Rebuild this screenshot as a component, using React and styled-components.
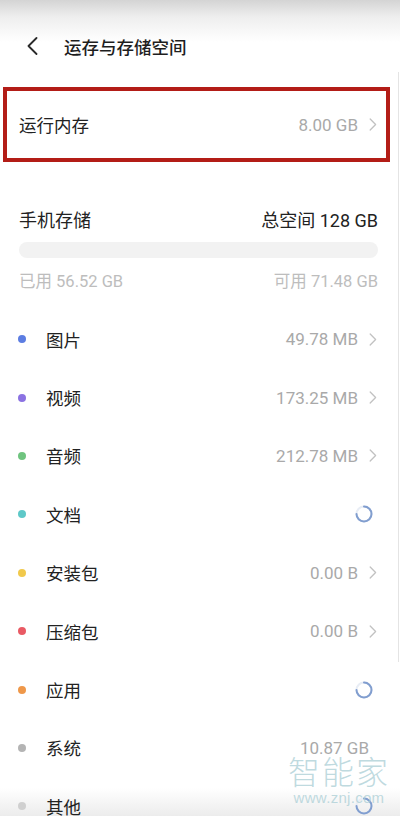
import React from "react";
import styled, { createGlobalStyle } from "styled-components";

const Global = createGlobalStyle`
  html, body { margin: 0; padding: 0; background: #fff; }
  body { font-family: Roboto, "Noto Sans CJK SC", "Noto Sans", sans-serif; -webkit-font-smoothing: antialiased; }
  * { box-sizing: border-box; }
`;

const Screen = styled.div`
  position: relative;
  width: 400px;
  height: 816px;
  overflow: hidden;
  background: #fff;
  isolation: isolate;
`;

const TopFade = styled.div`
  position: absolute;
  left: 0; right: 0; top: 0;
  height: 42px;
  background: linear-gradient(#d4d4d4 0%, #eeeeee 40%, rgba(255,255,255,0) 100%);
  pointer-events: none;
  z-index: 0;
`;

const BottomFade = styled.div`
  position: absolute;
  left: 0; right: 0; bottom: 0;
  height: 28px;
  background: linear-gradient(rgba(255,255,255,0), #ececec);
  pointer-events: none;
  z-index: 0;
`;

const ScrollTrack = styled.div`
  position: absolute;
  right: 1px; top: 72px;
  width: 1px; height: 590px;
  background: #e4e4e4;
`;

const Header = styled.header`
  position: relative;
  z-index: 1;
  display: flex;
  align-items: center;
  height: 60px;
  margin-top: 16px;
  padding-left: 27px;
  gap: 26px;
`;

const Title = styled.h1`
  margin: 0;
  font-size: 17.5px;
  font-weight: 500;
  color: #1e1e1e;
  font-family: "Noto Sans CJK SC", sans-serif;
`;

const Highlight = styled.div`
  margin: 11px 10px 0 3px;
  height: 75px;
  border: 4px solid #b31d17;
  display: flex;
  align-items: center;
  padding: 0 8px 0 12px;
`;

const Label = styled.span`
  font-family: "Noto Sans CJK SC", sans-serif;
  font-size: 17.5px;
  color: #222;
  flex: 1;
`;

const Value = styled.span`
  font-size: 17px;
  color: ${(p) => p.$color || "#a9a9a9"};
  margin-right: ${(p) => p.$mr || 0}px;
`;

const Slot = styled.span`
  width: 20px;
  display: flex;
  justify-content: flex-end;
  padding-right: 1px;
`;

const StorageSection = styled.section`
  margin-top: 45px;
  padding: 0 22px 0 19px;
`;

const SummaryRow = styled.div`
  display: flex;
  justify-content: space-between;
  align-items: center;
  height: ${(p) => p.$h}px;
  margin-top: ${(p) => p.$mt || 0}px;
`;

const Strong = styled.span`
  font-size: 18px;
  color: #222;
  font-family: Roboto, "Noto Sans CJK SC", sans-serif;
`;

const Muted = styled.span`
  font-size: 16.5px;
  color: #bdbdbd;
`;

const Bar = styled.div`
  margin-top: 11px;
  height: 16px;
  border-radius: 8px;
  background: #f2f2f2;
`;

const List = styled.ul`
  position: relative;
  z-index: 1;
  list-style: none;
  margin: 20px 0 0;
  padding: 0;
`;

const Row = styled.li`
  display: flex;
  align-items: center;
  height: 58.4px;
  padding: 0 22px 0 18px;
`;

const Dot = styled.span`
  width: 8px;
  height: 8px;
  border-radius: 50%;
  background: ${(p) => p.$c};
  margin-right: 20px;
`;

const SpinnerBox = styled.span`
  margin-right: 5px;
  display: flex;
`;

const Watermark = styled.div`
  position: absolute;
  left: 288px;
  top: 750px;
  z-index: 2;
  display: flex;
  flex-direction: column;
  align-items: center;
  color: rgba(170, 206, 213, 0.75);
  pointer-events: none;
  white-space: nowrap;
`;

const WmBig = styled.span`
  font-family: "Noto Sans CJK SC", sans-serif;
  font-size: 32px;
  font-weight: 300;
  line-height: 40px;
  letter-spacing: 2px;
`;

const WmSmall = styled.span`
  font-family: "Liberation Sans", sans-serif;
  font-size: 15px;
  line-height: 15px;
  letter-spacing: 0.3px;
`;

const Chevron = () => (
  <svg width="8" height="13" viewBox="0 0 8 13">
    <path d="M1.2 1 L6.6 6.5 L1.2 12" fill="none" stroke="#c2c2c2" strokeWidth="1.3" strokeLinecap="round" strokeLinejoin="round" />
  </svg>
);

const Back = () => (
  <svg width="11" height="18" viewBox="0 0 11 18">
    <path d="M9.5 1 L1.5 9 L9.5 17" fill="none" stroke="#2a2a2a" strokeWidth="1.8" strokeLinecap="round" strokeLinejoin="round" />
  </svg>
);

const Spinner = () => (
  <SpinnerBox>
    <svg width="18" height="18" viewBox="0 0 18 18">
      <circle cx="9" cy="9" r="7.5" fill="none" stroke="#e8edf5" strokeWidth="2" />
      <path d="M9 1.5 A7.5 7.5 0 1 1 1.5 9" fill="none" stroke="#6f8fc8" strokeWidth="2" strokeLinecap="round" opacity="0.85" />
    </svg>
  </SpinnerBox>
);

const items = [
  { name: "图片", color: "#5c7de2", value: "49.78 MB", end: "chev" },
  { name: "视频", color: "#8b72e2", value: "173.25 MB", end: "chev" },
  { name: "音频", color: "#6fc47f", value: "212.78 MB", end: "chev" },
  { name: "文档", color: "#5ec8c8", end: "spin" },
  { name: "安装包", color: "#f1c94c", value: "0.00 B", end: "chev" },
  { name: "压缩包", color: "#e95a64", value: "0.00 B", end: "chev" },
  { name: "应用", color: "#ef984a", end: "spin" },
  { name: "系统", color: "#b4b4b4", value: "10.87 GB", end: "none" },
  { name: "其他", color: "#d0d0d0", end: "spin" },
];

export default function App() {
  return (
    <Screen>
      <Global />
      <TopFade />
      <BottomFade />
      <ScrollTrack />
      <Header>
        <Back />
        <Title>运存与存储空间</Title>
      </Header>
      <Highlight>
        <Label>运行内存</Label>
        <Value>8.00 GB</Value>
        <Slot><Chevron /></Slot>
      </Highlight>
      <StorageSection>
        <SummaryRow $h={24}>
          <Strong>手机存储</Strong>
          <Strong>总空间 128 GB</Strong>
        </SummaryRow>
        <Bar />
        <SummaryRow $h={20} $mt={12}>
          <Muted>已用 56.52 GB</Muted>
          <Muted>可用 71.48 GB</Muted>
        </SummaryRow>
      </StorageSection>
      <List>
        {items.map((it) => (
          <Row key={it.name}>
            <Dot $c={it.color} />
            <Label>{it.name}</Label>
            {it.value && <Value $mr={it.end === "none" ? 9 : 0}>{it.value}</Value>}
            {it.end === "chev" && <Slot><Chevron /></Slot>}
            {it.end === "spin" && <Spinner />}
          </Row>
        ))}
      </List>
      <Watermark>
        <WmBig>智能家</WmBig>
        <WmSmall>www.znj.com</WmSmall>
      </Watermark>
    </Screen>
  );
}
